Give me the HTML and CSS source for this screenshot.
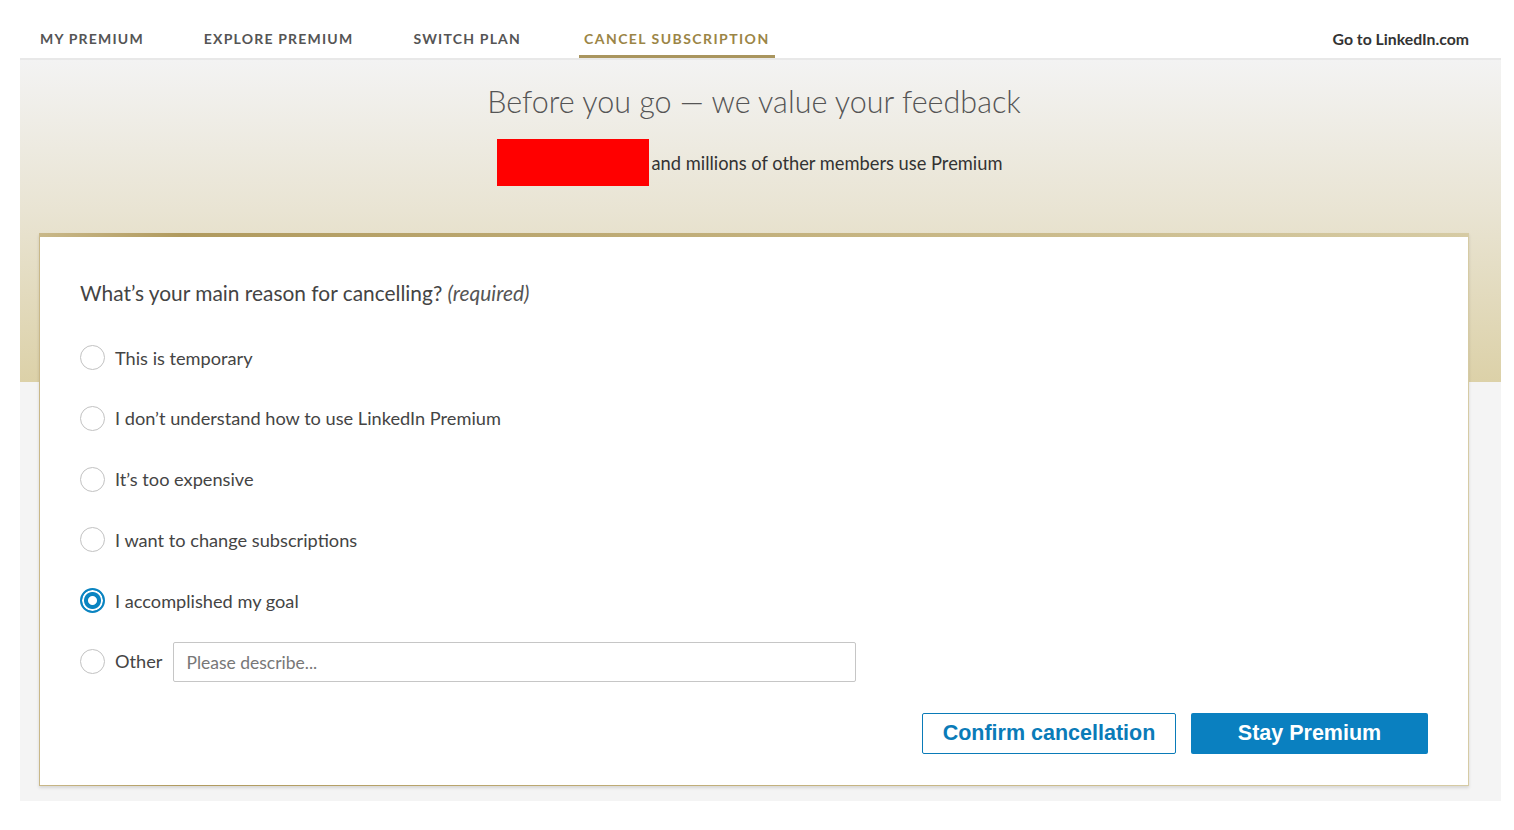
FILE: index.html
```html
<!DOCTYPE html>
<html lang="en">
<head>
  <meta charset="UTF-8" />
  <meta name="viewport" content="width=device-width, initial-scale=1.0" />
  <title>Cancel Premium</title>
  <link rel="stylesheet" href="styles.css">
</head>
<body>
  <div class="page">
    <nav class="tabs">
      <a class="tab" href="#">MY PREMIUM</a>
      <a class="tab" href="#">EXPLORE PREMIUM</a>
      <a class="tab" href="#">SWITCH PLAN</a>
      <a class="tab active" href="#">CANCEL SUBSCRIPTION</a>
      <a class="home-link" href="#">Go to LinkedIn.com</a>
    </nav>

    <main class="main">
      <header class="hero">
        <h1>Before you go — we value your feedback</h1>
        <p class="members"><span class="redacted"></span>and millions of other members use Premium</p>
      </header>

      <form class="card">
        <p class="question">What’s your main reason for cancelling? <em>(required)</em></p>

        <label class="option"><input type="radio" name="reason"><span>This is temporary</span></label>
        <label class="option"><input type="radio" name="reason"><span>I don’t understand how to use LinkedIn Premium</span></label>
        <label class="option"><input type="radio" name="reason"><span>It’s too expensive</span></label>
        <label class="option"><input type="radio" name="reason"><span>I want to change subscriptions</span></label>
        <label class="option"><input type="radio" name="reason" checked><span>I accomplished my goal</span></label>
        <div class="option">
          <input type="radio" name="reason" id="other"><label for="other">Other</label>
          <input type="text" class="describe" placeholder="Please describe...">
        </div>

        <div class="actions">
          <button type="button" class="btn btn-outline">Confirm cancellation</button>
          <button type="button" class="btn btn-primary">Stay Premium</button>
        </div>
      </form>
    </main>
  </div>
</body>
</html>
```

FILE: styles.css
```css
body {
  margin: 0;
  background: #fff;
  font-family: Lato, "Open Sans", sans-serif;
  color: #333;
}

.page {
  width: 1481px;
  margin-left: 20px;
  padding-bottom: 30px;
}

/* top tabs */
.tabs {
  display: flex;
  align-items: flex-end;
  height: 58px;
  padding-left: 15px;
  border-bottom: 2px solid #e8e8e8;
  background: #fff;
}

.tab {
  margin-right: 50px;
  padding: 0 5px 8px;
  border-bottom: 3px solid transparent;
  font-size: 14px;
  font-weight: 700;
  letter-spacing: 1.2px;
  color: #555;
  text-decoration: none;
}

.tab.active {
  margin-left: 3px;
  letter-spacing: 1.45px;
  color: #9b8546;
  border-bottom-color: #a9955e;
}

.home-link {
  margin-left: auto;
  margin-right: 32px;
  padding-bottom: 10px;
  font-size: 15.8px;
  font-weight: 700;
  color: #333;
  text-decoration: none;
}

/* gold band behind the card */
.main {
  background: linear-gradient(to bottom, #f3f3f3 0, #e9e4d3 150px, #dcd1a8 322px, #f4f4f4 322px);
  padding: 0 32px 15px 19px;
}

.hero {
  text-align: center;
  padding: 21px 0 47px;
}

.hero h1 {
  margin: 0;
  font-size: 30.5px;
  font-weight: 300;
  line-height: 40px;
  color: #555;
}

.members {
  display: flex;
  align-items: center;
  justify-content: center;
  margin: 18px 9px 0 0;
  font-size: 18.3px;
  color: #333;
}

.redacted {
  width: 152px;
  height: 47px;
  margin-right: 3px;
  background: #ff0000;
}

/* feedback card */
.card {
  background: #fff;
  border-image: linear-gradient(to right, #c9b889, #b09a5e 10%, #c7b684 60%, #d6cba4) 1;
  border-style: solid;
  border-width: 4px 1px 1px;
  box-shadow: 0 2px 3px rgba(0, 0, 0, 0.12);
  padding: 43px 40px 31px;
}

.question {
  margin: 0 0 32px;
  font-size: 20.9px;
  color: #444;
}

.question em {
  color: #555;
}

.option {
  display: flex;
  align-items: center;
  height: 41px;
  margin-bottom: 19.8px;
  font-size: 18.2px;
  color: #444;
}

.option input[type="radio"] {
  appearance: none;
  width: 25px;
  height: 25px;
  margin: 0 10px 0 0;
  border: 1px solid #c2c2c2;
  border-radius: 50%;
  background: #fff;
}

.option input[type="radio"]:checked {
  border: 2px solid #0a84c1;
  background: radial-gradient(circle, #fff 0 4px, #0a84c1 5px 8px, #fff 9px 10px, #0a84c1 11px);
}

.describe {
  width: 683px;
  height: 40px;
  box-sizing: border-box;
  margin: 2px 0 0 11px;
  padding: 0 12px;
  border: 1px solid #c6c6c6;
  border-radius: 2px;
  font-family: inherit;
  font-size: 17.5px;
  color: #333;
}

.describe::placeholder {
  color: #777;
}

.actions {
  display: flex;
  justify-content: flex-end;
  gap: 15px;
  margin-top: 31px;
}

.btn {
  height: 41px;
  border-radius: 2px;
  font-family: "Liberation Sans", Arial, sans-serif;
  font-size: 21.5px;
  font-weight: 700;
  cursor: pointer;
}

.btn-outline {
  width: 254px;
  background: #fff;
  border: 1px solid #0a7bb8;
  color: #0a7bb8;
}

.btn-primary {
  width: 237px;
  background: #0a80c0;
  border: none;
  color: #fff;
}
```
